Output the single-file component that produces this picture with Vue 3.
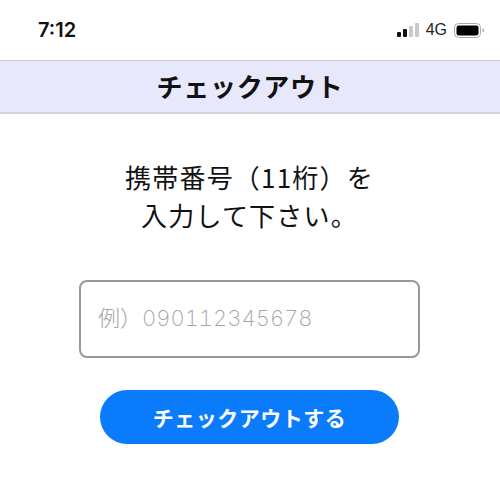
<script setup>
const bars = [
  { h: 5, on: true },
  { h: 8, on: true },
  { h: 11, on: false },
  { h: 14, on: false },
]
</script>

<template>
  <div class="screen">
    <div class="status">
      <span class="time">7:12</span>
      <div class="indicators">
        <div class="signal">
          <i v-for="(b, k) in bars" :key="k" :class="{ on: b.on }" :style="{ height: b.h + 'px' }"></i>
        </div>
        <span class="net">4G</span>
        <svg class="battery" width="31" height="15" viewBox="0 0 31 15">
          <rect x="0.5" y="0.5" width="26" height="14" rx="4" fill="none" stroke="#a8a8a8" />
          <rect x="2.5" y="2.5" width="22" height="10" rx="2.2" fill="#000" />
          <path d="M28.500 5.500c1.200.3 1.600 1 1.600 2s-.4 1.700-1.600 2z" fill="#a8a8a8" />
        </svg>
      </div>
    </div>
    <header class="title">チェックアウト</header>
    <main class="content">
      <p class="prompt">携帯番号（11桁）を<br />入力して下さい。</p>
      <input class="phone" type="tel" placeholder="例）090112345678" />
      <button class="submit" type="button">チェックアウトする</button>
    </main>
  </div>
</template>

<style>
html, body { margin: 0; background: #fff; }
</style>

<style scoped>
.screen {
  width: 500px;
  height: 500px;
  overflow: hidden;
  background: #fff;
  font-family: "Noto Sans CJK JP", "Liberation Sans", sans-serif;
  color: #000;
}
.status {
  height: 60px;
  box-sizing: border-box;
  padding: 18px 15px 0 38px;
  display: flex;
  justify-content: space-between;
  align-items: flex-start;
}
.time {
  font-family: "Inter", "Liberation Sans", sans-serif;
  font-weight: 600;
  font-size: 20px;
  line-height: 24px;
  color: #111;
}
.indicators {
  display: flex;
  align-items: center;
  height: 22px;
  margin-top: 1px;
}
.signal {
  display: flex;
  align-items: flex-end;
  gap: 2px;
  height: 14px;
  margin-right: 7px;
}
.signal i {
  display: block;
  width: 4px;
  border-radius: 1px;
  background: #c9c9c9;
}
.signal i.on { background: #111; }
.net {
  font-family: "Liberation Sans", sans-serif;
  font-size: 16px;
  line-height: 20px;
  color: #222;
  margin-right: 7px;
}
.title {
  height: 54px;
  box-sizing: border-box;
  background: #e8e8fc;
  border-top: 1px solid #cfcfd8;
  border-bottom: 2px solid #d2d2dc;
  display: flex;
  align-items: center;
  justify-content: center;
  padding-bottom: 2px;
  font-size: 26px;
  font-weight: 700;
  letter-spacing: 0.7px;
  color: #111;
}
.content {
  display: flex;
  flex-direction: column;
  align-items: center;
  padding-right: 1px;
}
.prompt {
  margin: 44px 0 0;
  text-align: center;
  font-size: 26px;
  letter-spacing: 1.2px;
  line-height: 38px;
  color: #111;
}
.phone {
  display: block;
  margin-top: 46px;
  width: 341px;
  height: 78px;
  box-sizing: border-box;
  border: 2px solid #999;
  border-radius: 8px;
  background: #fff;
  padding: 0 0 2px 17px;
  font-family: "Inter", "Noto Sans CJK JP", sans-serif;
  font-variant-numeric: tabular-nums;
  font-size: 22px;
  font-weight: 200;
  outline: none;
}
.phone::placeholder {
  color: #a3a3a3;
  opacity: 1;
}
.submit {
  display: block;
  margin-top: 32px;
  width: 299px;
  height: 54px;
  border: 0;
  border-radius: 27px;
  background: #0a7bfb;
  color: #fff;
  font-family: inherit;
  font-size: 21px;
  font-weight: 600;
  letter-spacing: 0.5px;
  padding: 0;
}
</style>
